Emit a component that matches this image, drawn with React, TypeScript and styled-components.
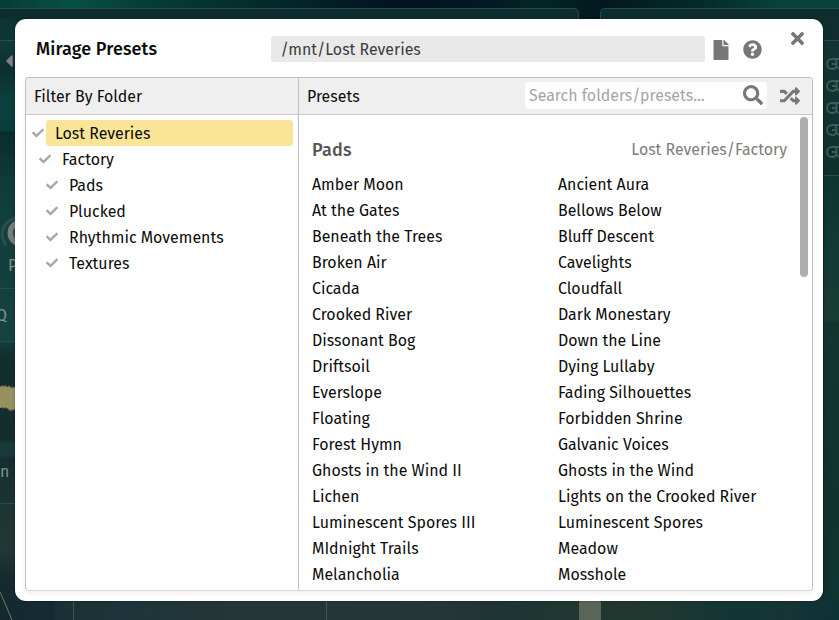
import React from "react";
import styled, { createGlobalStyle } from "styled-components";
import {
  FaCheck,
  FaFile,
  FaQuestionCircle,
  FaRandom,
  FaSearch,
  FaTimes,
  FaCaretLeft,
} from "react-icons/fa";

const Global = createGlobalStyle`
  * { box-sizing: border-box; }
  body {
    margin: 0;
    overflow: hidden;
    font-family: "Fira Sans", "Noto Sans CJK SC", "Noto Sans", sans-serif;
    font-size: 15.93px;
    color: #0c0c0c;
  }
`;

const Screen = styled.div`
  position: relative;
  width: 839px;
  height: 620px;
  overflow: hidden;
  padding: 19px 16px 19px 15px;
  background: #123331;
`;

/* The synth panel that shows round the edges of the dialog */
const Synth = styled.div`
  position: absolute;
  inset: 0;
  display: grid;
  grid-template: 19px 582px 19px / 15px 808px 16px;
`;

const TopStrip = styled.div`
  grid-column: 1 / -1;
  padding-top: 8px;
  display: flex;
  gap: 21px;
  background: linear-gradient(90deg, #063c35 0, #075045 70px, #053c38 150px, #04302f 230px, #03131f 400px, #031824 480px, #032723 540px, #03171f 600px, #042b2b 700px, #06423a 780px, #064439 839px);
`;

const TopPanel = styled.div<{ $width: number; $first?: boolean }>`
  width: ${(p) => p.$width}px;
  height: 14px;
  border: 1px solid #28494a;
  border-left-width: ${(p) => (p.$first ? 0 : 1)}px;
  border-right-width: ${(p) => (p.$first ? 1 : 0)}px;
  border-bottom: 0;
  border-radius: ${(p) => (p.$first ? "0 5px 0 0" : "5px 0 0 0")};
  background: #0d2d2e;
`;

const LeftEdge = styled.div`
  overflow: hidden;
  color: #7f9290;
  background: linear-gradient(#0c3533 0, #0c3533 20px, #103d3a 21px, #0c2f2f 50px, #0b3f3d 80px, #0a3e3b 112px, #0b2c2d 113px, #0d3532 140px, #103f3b 180px, #15403d 300px, #164341 320px, #122e2e 336px, #152d2e 420px, #1a3938 425px, #1a3938 436px, #152e31 440px, #1d3433 490px, #243635 530px, #152a30 560px, #132a31);
`;

const EdgeSlot = styled.div<{ $h: number; $line?: boolean }>`
  height: ${(p) => p.$h}px;
  border-bottom: 1px solid ${(p) => (p.$line ? "#2a4c4a" : "transparent")};
  display: flex;
  align-items: center;
  white-space: nowrap;
`;

const Caret = styled(FaCaretLeft)`
  color: #7d8085;
  font-size: 20px;
  margin-left: -1px;
  flex: none;
`;

const EdgeText = styled.span<{ $x: number }>`
  margin-left: ${(p) => p.$x}px;
`;

const EdgeDrawing = styled.svg`
  display: block;
  flex: none;
`;

const RightEdge = styled.div`
  overflow: hidden;
  background: linear-gradient(#102e2e 0, #0f2d2e 20px, #123432 22px, #0f312e 155px, #0e3530 157px, #143b33 260px, #183d33 300px, #12362f 304px, #10322d 480px, #0e3330);
  border-left: 1px solid #0e2a2b;
`;

const Links = styled.div`
  height: 136px;
  margin-top: 21px;
  padding: 15px 0 0 2px;
  display: flex;
  flex-direction: column;
  gap: 6px;
  border: solid #2b4a48;
  border-width: 1px 0;
`;

const BottomStrip = styled.div`
  grid-column: 1 / -1;
  display: flex;
  background: linear-gradient(90deg, #14292f 0, #152a32 54px, #1a3035 55px, #1c3439 130px, #243636 230px, #243838 420px, #1e3433 500px, #21382f 640px, #123535 740px, #173436 790px, #0d3134);
`;

const BottomSlot = styled.div<{ $w: number; $c?: string }>`
  width: ${(p) => p.$w}px;
  background: ${(p) => p.$c || "transparent"};
`;

const Dialog = styled.section`
  position: relative;
  height: 582px;
  padding: 0 10px 10px;
  background: #fff;
  border-radius: 11px;
  box-shadow: 0 0 3px rgba(0, 0, 0, 0.35);
`;

const TitleBar = styled.header`
  height: 58px;
  display: flex;
  align-items: flex-start;
  padding: 17px 5px 0 11px;
`;

const Title = styled.h1`
  margin: 0;
  width: 235px;
  font-size: 18px;
  line-height: 26px;
  font-weight: 500;
  letter-spacing: 0.12px;
`;

const PathField = styled.div`
  width: 434px;
  height: 26px;
  padding-left: 9.5px;
  line-height: 27px;
  border-radius: 3px;
  background: #e9e9e9;
  color: #3d3d3d;
`;

const TitleIcon = styled.button<{ $left: number; $top: number; $size: number }>`
  display: flex;
  padding: 0;
  border: 0;
  background: none;
  color: #777;
  margin: ${(p) => p.$top}px 0 0 ${(p) => p.$left}px;
  font-size: ${(p) => p.$size}px;
`;

const Browser = styled.div`
  height: 514px;
  display: grid;
  grid-template: 37px 1fr / 273px 1fr;
  border: 1px solid #bfbfbf;
  border-bottom-color: #d8d8d8;
  border-radius: 4px;
  box-shadow: 0 3px 5px rgba(0, 0, 0, 0.06);
  overflow: hidden;
`;

const Head = styled.div<{ $divided?: boolean }>`
  display: flex;
  align-items: center;
  padding: 1px 12px 0 8px;
  background: #efefef;
  border-bottom: 1px solid #c9c9c9;
  border-right: ${(p) => (p.$divided ? "1px solid #bfbfbf" : "0")};
`;

const Search = styled.div`
  width: 242px;
  height: 27px;
  margin: -2px 13px 0 auto;
  padding: 0 4px 0 4px;
  display: flex;
  align-items: center;
  justify-content: space-between;
  background: #fff;
  border-radius: 4px;
  color: #a5a5a5;
`;

const HeadIcon = styled.span`
  display: flex;
  margin-top: -1px;
  font-size: 20px;
  color: #777;
`;

const Folders = styled.nav`
  padding: 5px 5px 0 6px;
  border-right: 1px solid #bfbfbf;
`;

const Folder = styled.div<{ $depth: number }>`
  height: 26px;
  display: flex;
  align-items: center;
  gap: 2px;
  padding-left: ${(p) => p.$depth * 7}px;
  color: #a8a8a8;
`;

const FolderName = styled.span<{ $active?: boolean }>`
  flex: 1;
  height: 26px;
  padding-left: 9px;
  line-height: 27px;
  border-radius: 3px;
  color: #0c0c0c;
  background: ${(p) => (p.$active ? "#fae596" : "transparent")};
`;

const PresetArea = styled.main`
  display: flex;
  justify-content: space-between;
  padding: 2px 4px 0 13px;
`;

const PresetList = styled.div`
  width: 475px;
`;

const GroupHead = styled.div`
  height: 55px;
  padding-top: 20px;
  display: flex;
  justify-content: space-between;
  line-height: 26px;
  color: #7d7d7d;
`;

const GroupName = styled.h2`
  margin: 0;
  font-size: 18px;
  font-weight: 500;
  letter-spacing: 0.2px;
  color: #555;
`;

const Columns = styled.div`
  display: grid;
  grid-template-columns: 246px 1fr;
  grid-auto-rows: 26px;
  line-height: 26px;
  white-space: nowrap;
`;

const Thumb = styled.div`
  width: 8px;
  height: 160px;
  border-radius: 4px;
  background: #aeaeae;
`;

const folders = [
  { name: "Lost Reveries", depth: 0, active: true },
  { name: "Factory", depth: 1 },
  { name: "Pads", depth: 2 },
  { name: "Plucked", depth: 2 },
  { name: "Rhythmic Movements", depth: 2 },
  { name: "Textures", depth: 2 },
];

const presets = [
  "Amber Moon", "Ancient Aura",
  "At the Gates", "Bellows Below",
  "Beneath the Trees", "Bluff Descent",
  "Broken Air", "Cavelights",
  "Cicada", "Cloudfall",
  "Crooked River", "Dark Monestary",
  "Dissonant Bog", "Down the Line",
  "Driftsoil", "Dying Lullaby",
  "Everslope", "Fading Silhouettes",
  "Floating", "Forbidden Shrine",
  "Forest Hymn", "Galvanic Voices",
  "Ghosts in the Wind II", "Ghosts in the Wind",
  "Lichen", "Lights on the Crooked River",
  "Luminescent Spores III", "Luminescent Spores",
  "MIdnight Trails", "Meadow",
  "Melancholia", "Mosshole",
];

const Knob = () => (
  <EdgeDrawing width="15" height="44">
    <path d="M15 8A17 17 0 0 0 6 35" fill="none" stroke="#27514d" strokeWidth="3" />
    <circle cx="21" cy="23" r="13.5" fill="#777d7c" />
    <path d="M15 18C12 20 12 25 15 29Z" fill="#3d4c4b" />
  </EdgeDrawing>
);

const Wave = () => (
  <EdgeDrawing width="15" height="28">
    <path
      d="M0 2L1 3L2 1L3 3L4 1L5 3L6 1L7 3L8 3L9 1L10 4L11 2L12 5L13 2L14 4L15 3V26L14 25L13 27L12 25L11 28L10 25L9 27L8 24L7 25L6 23L5 25L4 23L3 25L2 23L1 24L0 24Z"
      fill="#98915f"
    />
  </EdgeDrawing>
);

const LinkGlyph = () => (
  <EdgeDrawing width="20" height="16" fill="none" stroke="#3d5b58" strokeWidth="1.8">
    <path d="M20 3H6A5 5 0 0 0 6 13H7.5A3.5 4 0 0 0 10.5 9V6.500A3 3 0 0 0 8 3M6 8H11M10.500 9.500A3.500 3.500 0 0 0 14 13H20" />
  </EdgeDrawing>
);

export default function App() {
  return (
    <Screen>
      <Global />
      <Synth aria-hidden>
        <TopStrip>
          <TopPanel $width={579} $first />
          <TopPanel $width={239} />
        </TopStrip>
        <LeftEdge>
          <EdgeSlot $h={22} $line />
          <EdgeSlot $h={40}><Caret /></EdgeSlot>
          <EdgeSlot $h={128} />
          <EdgeSlot $h={46}><Knob /></EdgeSlot>
          <EdgeSlot $h={22}><EdgeText $x={8}>P</EdgeText></EdgeSlot>
          <EdgeSlot $h={12} $line />
          <EdgeSlot $h={53} $line><EdgeText $x={-4}>Q</EdgeText></EdgeSlot>
          <EdgeSlot $h={42} />
          <EdgeSlot $h={28}><Wave /></EdgeSlot>
          <EdgeSlot $h={48} />
          <EdgeSlot $h={24}><EdgeText $x={0}>n</EdgeText></EdgeSlot>
          <EdgeSlot $h={20} $line />
          <EdgeSlot $h={88} />
          <EdgeDrawing width="15" height="9"><path d="M0 0L4 9" stroke="#777a58" /></EdgeDrawing>
        </LeftEdge>
        <div />
        <RightEdge>
          <Links>
            {[0, 1, 2, 3, 4].map((i) => <LinkGlyph key={i} />)}
          </Links>
        </RightEdge>
        <BottomStrip>
          <EdgeDrawing width="15" height="19"><path d="M4 0L12 19" stroke="#777a58" /></EdgeDrawing>
          <BottomSlot $w={58} />
          <BottomSlot $w={1} $c="#3b5458" />
          <BottomSlot $w={252} />
          <BottomSlot $w={1} $c="#41575a" />
          <BottomSlot $w={252} />
          <BottomSlot $w={22} $c="#596558" />
        </BottomStrip>
      </Synth>

      <Dialog>
        <TitleBar>
          <Title>Mirage Presets</Title>
          <PathField>/mnt/Lost Reveries</PathField>
          <TitleIcon $left={6} $top={4} $size={20}><FaFile /></TitleIcon>
          <TitleIcon $left={12} $top={4} $size={19}><FaQuestionCircle /></TitleIcon>
          <TitleIcon $left={26} $top={-7} $size={19}><FaTimes /></TitleIcon>
        </TitleBar>
        <Browser>
          <Head $divided>Filter By Folder</Head>
          <Head>
            Presets
            <Search>
              Search folders/presets...
              <HeadIcon><FaSearch /></HeadIcon>
            </Search>
            <HeadIcon><FaRandom /></HeadIcon>
          </Head>
          <Folders>
            {folders.map((f) => (
              <Folder key={f.name} $depth={f.depth}>
                <FaCheck size={12} />
                <FolderName $active={f.active}>{f.name}</FolderName>
              </Folder>
            ))}
          </Folders>
          <PresetArea>
            <PresetList>
              <GroupHead>
                <GroupName>Pads</GroupName>
                <span>Lost Reveries/Factory</span>
              </GroupHead>
              <Columns>
                {presets.map((name) => (
                  <span key={name}>{name}</span>
                ))}
              </Columns>
            </PresetList>
            <Thumb />
          </PresetArea>
        </Browser>
      </Dialog>
    </Screen>
  );
}
